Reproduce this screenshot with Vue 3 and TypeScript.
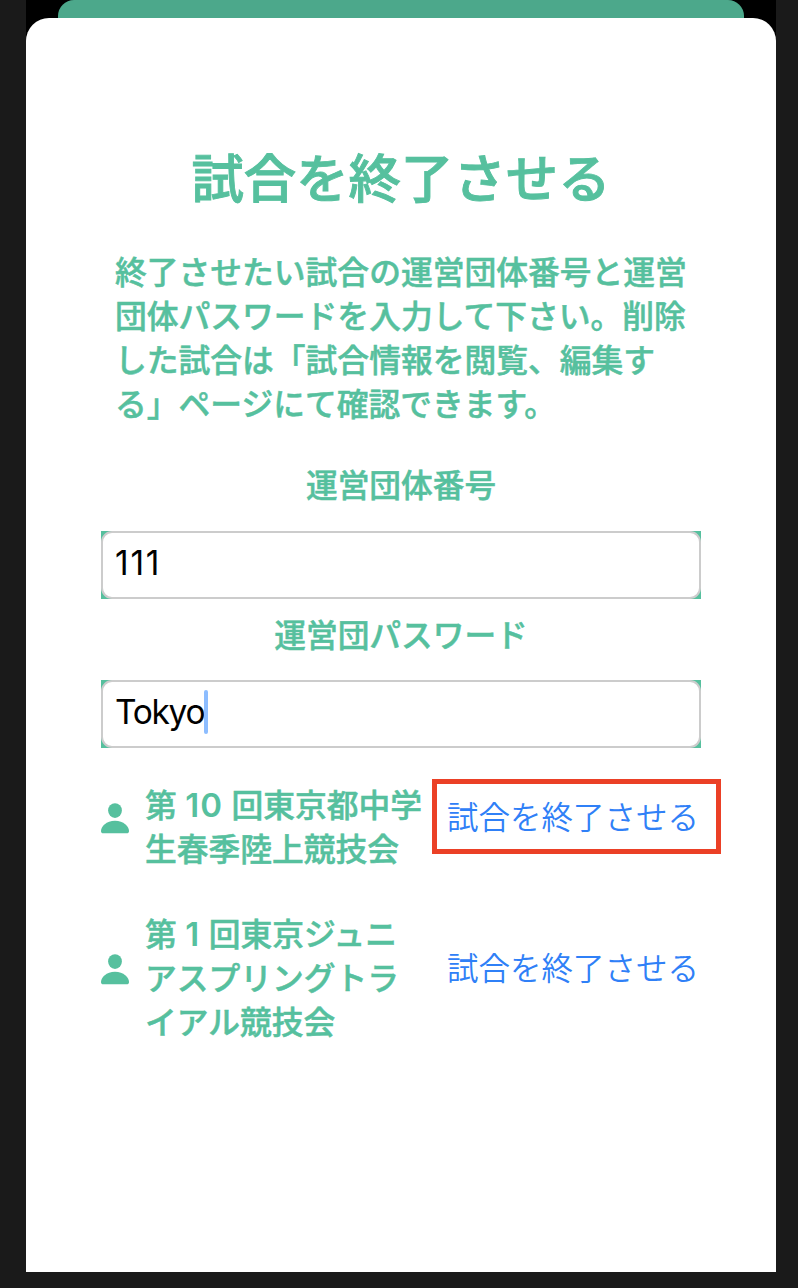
<script setup lang="ts">
interface Match {
  id: number
  round: string
  first: string
  rest: string[]
  highlighted: boolean
}

const description: string[] = [
  '終了させたい試合の運営団体番号と運営',
  '団体パスワードを入力して下さい。削除',
  'した試合は「試合情報を閲覧、編集す',
  'る」ページにて確認できます。',
]

const matches: Match[] = [
  { id: 10, round: '10', first: '回東京都中学', rest: ['生春季陸上競技会'], highlighted: true },
  { id: 1, round: '1', first: '回東京ジュニ', rest: ['アスプリングトラ', 'イアル競技会'], highlighted: false },
]
</script>

<template>
  <div class="screen">
    <div class="behind"><div class="behind-card"></div></div>
    <main class="sheet">
      <h1 class="title">試合を終了させる</h1>
      <p class="description">
        <span v-for="line in description" :key="line" class="line">{{ line }}</span>
      </p>
      <div class="label first">運営団体番号</div>
      <div class="field"><div class="field-inner"><span class="value digits">111</span></div></div>
      <div class="label second">運営団パスワード</div>
      <div class="field"><div class="field-inner"><span class="value word">Tokyo</span><i class="caret"></i></div></div>
      <ul class="matches">
        <li v-for="match in matches" :key="match.id" class="match" :class="{ tall: !match.highlighted }">
          <svg class="person" viewBox="0 0 28 31" width="28" height="31">
            <ellipse cx="14" cy="7.6" rx="6.9" ry="7.4" />
            <path d="M2.4 30.2C.8 30.2 0 29.400 0 27.900C0 23.500 5.400 17.700 14 17.700S28 23.500 28 27.900C28 29.400 27.200 30.200 25.600 30.200Z" />
          </svg>
          <div class="name">
            <span class="line">第 <span class="round">{{ match.round }}</span> {{ match.first }}</span>
            <span v-for="line in match.rest" :key="line" class="line">{{ line }}</span>
          </div>
          <a class="finish" :class="{ highlighted: match.highlighted }">試合を終了させる</a>
        </li>
      </ul>
    </main>
  </div>
</template>

<style>
body {
  margin: 0;
  background: #1a1a1a;
}
</style>

<style scoped>
.screen {
  box-sizing: border-box;
  width: 798px;
  height: 1288px;
  padding: 0 22px 16px 26px;
  background: #1a1a1a;
  font-family: Inter, "Noto Sans CJK JP", sans-serif;
  color: #56c09e;
  overflow: hidden;
}
.behind {
  height: 44px;
  padding: 0 32px;
  background: #000;
}
.behind-card {
  height: 18px;
  border-radius: 16px 16px 0 0;
  background: #4ca88b;
}
.sheet {
  box-sizing: border-box;
  height: 1254px;
  margin-top: -26px;
  padding: 123px 75px 0;
  border-radius: 23px 23px 0 0;
  background: #fff;
  position: relative;
}
.title {
  margin: 0;
  height: 76px;
  font-size: 52.4px;
  line-height: 76px;
  font-weight: 500;
  -webkit-text-stroke: 0.9px currentColor;
  text-align: center;
  white-space: nowrap;
}
.description {
  margin: 34px 0 0 14px;
  font-size: 31.78px;
  line-height: 44px;
  font-weight: 500;
  -webkit-text-stroke: 0.5px currentColor;
}
.line {
  display: block;
  white-space: nowrap;
}
.label {
  height: 44px;
  font-size: 31.7px;
  line-height: 44px;
  font-weight: 500;
  -webkit-text-stroke: 0.5px currentColor;
  text-align: center;
}
.first {
  margin: 37px 0 23px;
}
.second {
  margin: 15px 0 22px;
}
.field {
  height: 68px;
  background: #56c09e;
}
.field-inner {
  box-sizing: border-box;
  display: flex;
  align-items: center;
  height: 68px;
  padding: 0 12px 4px;
  border: 2px solid #ccc;
  border-radius: 11px;
  background: #fff;
  color: #000;
}
.value {
  font-size: 33.5px;
  line-height: 44px;
}
.digits {
  letter-spacing: 1.8px;
}
.word {
  letter-spacing: -1.3px;
}
.caret {
  width: 4px;
  height: 44px;
  border-radius: 2px;
  background: #8dbdff;
}
.matches {
  margin: 0;
  padding: 36px 0 0;
  list-style: none;
}
.match {
  display: flex;
  align-items: flex-start;
  height: 88px;
}
.match.tall {
  height: 132px;
  margin-top: 41px;
}
.person {
  flex: none;
  margin-top: 19px;
  fill: #56c09e;
}
.tall .person {
  margin-top: 41px;
}
.name {
  flex: none;
  width: 286px;
  margin-left: 16px;
  font-size: 31.75px;
  line-height: 44px;
  font-weight: 500;
  -webkit-text-stroke: 0.5px currentColor;
}
.round {
  font-size: 33px;
  line-height: 1;
  font-weight: 600;
  letter-spacing: 1.1px;
  -webkit-text-stroke: 0;
}
.finish {
  box-sizing: border-box;
  flex: none;
  width: 289px;
  height: 75px;
  margin: -5px 0 0 1px;
  border: 5px solid transparent;
  padding: 1px 0 0 10px;
  font-size: 31.5px;
  line-height: 65px;
  font-weight: 350;
  color: #2f80f7;
  white-space: nowrap;
}
.tall .finish {
  margin-top: 17px;
}
.finish.highlighted {
  border-color: #eb4026;
}
</style>
